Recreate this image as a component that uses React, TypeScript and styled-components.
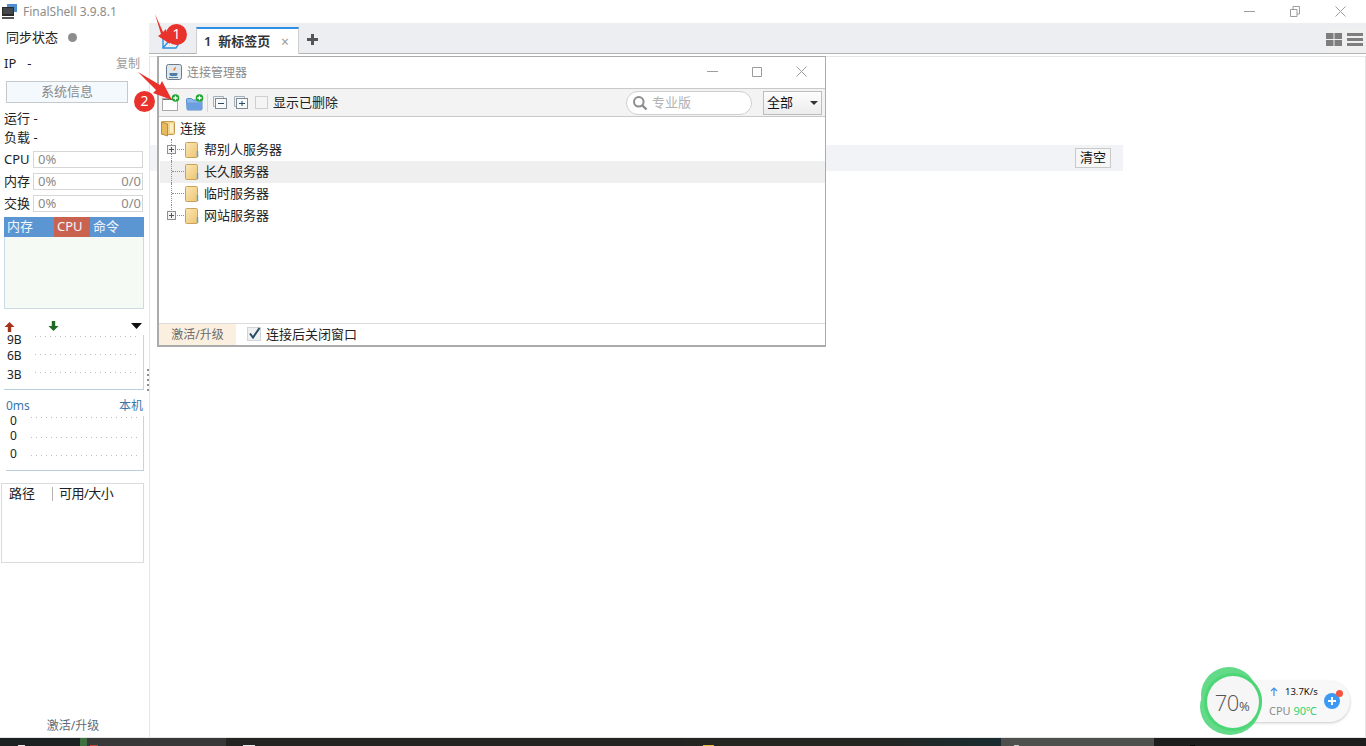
import React from "react";
import styled, { createGlobalStyle } from "styled-components";

const GlobalStyle = createGlobalStyle`
  html, body {
    margin: 0;
    padding: 0;
    background: #fff;
    overflow: hidden;
  }
  * {
    box-sizing: border-box;
  }
  body {
    font-family: "Noto Sans", "Noto Sans CJK SC", sans-serif;
    font-size: 13px;
    color: #222;
  }
`;

const Page = styled.div`
  width: 1366px;
  height: 746px;
  display: flex;
  flex-direction: column;
  overflow: hidden;
`;

/* ---- title bar ---- */

const TitleBar = styled.div`
  height: 23px;
  flex: none;
  display: flex;
  align-items: center;
  padding-left: 2px;
`;

const TitleText = styled.span`
  margin-left: 6px;
  color: #8c8c8c;
  font-size: 12px;
  line-height: 23px;
`;

const WindowButtons = styled.div`
  margin-left: auto;
  display: flex;
  align-items: center;
  padding-right: 20px;
  gap: 35px;
  svg {
    display: block;
  }
`;

/* ---- left panel ---- */

const Workspace = styled.div`
  flex: 1;
  display: flex;
  min-height: 0;
  border-bottom: 1px solid #e6e6e6;
`;

const Sidebar = styled.aside`
  width: 149px;
  flex: none;
  display: flex;
  flex-direction: column;
  position: relative;
`;

const SyncRow = styled.div`
  height: 28px;
  display: flex;
  align-items: center;
  padding: 0 0 2px 6px;
  gap: 10px;
`;

const SyncDot = styled.span`
  width: 9px;
  height: 9px;
  border-radius: 50%;
  background: #8d8d8d;
  margin-top: 2px;
`;

const IpRow = styled.div`
  height: 22px;
  margin-top: 1px;
  display: flex;
  align-items: center;
  padding: 0 9px 0 4px;
`;

const IpDash = styled.span`
  margin-left: 11px;
`;

const CopyLink = styled.span`
  margin-left: auto;
  color: #9a9a9a;
  font-size: 12px;
`;

const SysButton = styled.div`
  width: 122px;
  height: 22px;
  margin: 7px 0 0 6px;
  border: 1px solid #c5c9cb;
  background: #f3f9fd;
  color: #8a8a8a;
  text-align: center;
  line-height: 18px;
`;

const Stats = styled.div`
  margin-top: 6px;
`;

const StatRow = styled.div`
  height: 19px;
  line-height: 19px;
  padding-left: 4px;
`;

const Meters = styled.div`
  margin-top: 4px;
  display: flex;
  flex-direction: column;
  gap: 5px;
`;

const MeterRow = styled.div`
  height: 17px;
  display: flex;
  align-items: center;
  padding-left: 4px;
`;

const MeterLabel = styled.span`
  width: 29px;
  flex: none;
  padding-bottom: 2px;
`;

const MeterBar = styled.div`
  width: 110px;
  height: 17px;
  border: 1px solid #d6d6d6;
  display: flex;
  justify-content: space-between;
  padding: 0 1px 0 4px;
  color: #8a8a8a;
  font-size: 13px;
  line-height: 14px;
`;

const MonitorTabs = styled.div`
  width: 140px;
  height: 20px;
  margin: 5px 0 0 4px;
  display: flex;
  background: #5b96d3;
  color: #f2f6fb;
  line-height: 18px;
`;

const MonitorTab = styled.div<{ $w: number; $active?: boolean }>`
  width: ${(p) => p.$w}px;
  padding-left: 3px;
  background: ${(p) => (p.$active ? "#c9634f" : "transparent")};
`;

const MonitorPlot = styled.div`
  width: 140px;
  height: 72px;
  margin-left: 4px;
  background: #f5faf4;
  border: 1px solid #c8dbe7;
  border-top: 0;
`;

const TrafficHead = styled.div`
  height: 12px;
  width: 140px;
  margin: 11px 0 0 4px;
  display: flex;
  align-items: center;
  justify-content: space-between;
  padding-right: 2px;
  svg {
    display: block;
  }
`;

const TrafficArrows = styled.div`
  display: flex;
  gap: 33px;
`;

const Chart = styled.div<{ $left: number; $h: number; $mt?: number }>`
  width: ${(p) => 144 - p.$left}px;
  height: ${(p) => p.$h}px;
  margin: ${(p) => p.$mt ?? 0}px 0 0 ${(p) => p.$left}px;
  border-right: 1px solid #c5d5dd;
  border-bottom: 1px solid #b8d0da;
  display: flex;
`;

const ChartAxis = styled.div<{ $w: number; $pad: number }>`
  width: ${(p) => p.$w}px;
  flex: none;
  padding-left: ${(p) => p.$pad}px;
  font-size: 12px;
  line-height: 14px;
`;

const AxisTick = styled.div<{ $top: number }>`
  margin-top: ${(p) => p.$top}px;
`;

const ChartLines = styled.div`
  flex: 1;
  padding-right: 3px;
`;

const GridLine = styled.div<{ $top: number }>`
  margin-top: ${(p) => p.$top}px;
  height: 1px;
  background: repeating-linear-gradient(to right, #bcbcbc 0 1px, transparent 1px 5px);
`;

const PingHead = styled.div`
  height: 16px;
  margin: 7px 6px 3px 6px;
  display: flex;
  justify-content: space-between;
  color: #3d76ab;
  font-size: 12px;
  line-height: 18px;
`;

const DiskTable = styled.div`
  width: 143px;
  height: 80px;
  margin: 12px 0 0 1px;
  border: 1px solid #d9dcdc;
  display: flex;
  align-items: flex-start;
  padding-top: 3px;
`;

const DiskColumn = styled.div<{ $w?: number; $divider?: boolean }>`
  width: ${(p) => (p.$w ? `${p.$w}px` : "auto")};
  height: 14px;
  padding-left: ${(p) => (p.$divider ? 6 : 7)}px;
  border-left: ${(p) => (p.$divider ? "1px solid #b4b4b4" : "0")};
  line-height: 12px;
  font-size: 13px;
  letter-spacing: ${(p) => (p.$divider ? "-0.5px" : "0")};
`;

const SidebarUpgrade = styled.div`
  margin-top: auto;
  height: 24px;
  text-align: center;
  color: #5e6b78;
  font-size: 12px;
  line-height: 26px;
  padding-right: 3px;
`;

const ResizeGrip = styled.div`
  position: absolute;
  right: 0;
  top: 346px;
  width: 2px;
  height: 22px;
  background: repeating-linear-gradient(to bottom, #8e8e8e 0 2px, transparent 2px 5px);
`;

/* ---- main area ---- */

const Main = styled.main`
  flex: 1;
  min-width: 0;
  position: relative;
  display: flex;
  flex-direction: column;
`;

const TabBar = styled.div`
  height: 31px;
  flex: none;
  background: #edeef1;
  border-bottom: 1px solid #b4b4b4;
  display: flex;
  align-items: flex-end;
  padding-left: 11px;
`;

const TabBarIcon = styled.div`
  width: 36px;
  height: 30px;
  display: flex;
  align-items: center;
  padding: 6px 0 0 2px;
  svg {
    display: block;
  }
`;

const Tab = styled.div`
  width: 103px;
  height: 27px;
  margin-bottom: -1px;
  background: #fff;
  border-top: 2px solid #2b8fe3;
  border-left: 1px solid #cfcfcf;
  border-right: 1px solid #cfcfcf;
  display: flex;
  align-items: center;
  padding: 0 9px 3px 7px;
  font-weight: 600;
  color: #333;
`;

const TabClose = styled.span`
  margin-left: auto;
  margin-top: 3px;
  color: #9b9b9b;
  font-weight: 400;
  font-size: 14px;
  line-height: 1;
`;

const TabAdd = styled.div`
  height: 30px;
  margin-left: 8px;
  padding-top: 3px;
  display: flex;
  align-items: center;
  svg {
    display: block;
  }
`;

const LayoutToggle = styled.div`
  margin-left: auto;
  width: 40px;
  height: 26px;
  background: #efefef;
  display: flex;
  align-items: center;
  gap: 5px;
  padding-bottom: 1px;
  svg {
    display: block;
  }
`;

const Content = styled.div`
  flex: 1;
  margin-top: 2px;
  border: 1px solid #e6e6e6;
  border-bottom: 0;
  padding-top: 88px;
`;

const LogBar = styled.div`
  width: 973px;
  height: 26px;
  background: #f2f3f7;
  display: flex;
  align-items: center;
  justify-content: flex-end;
  padding-right: 12px;
`;

const ClearButton = styled.div`
  width: 36px;
  height: 20px;
  border: 1px solid #c9c9c9;
  background: #f6f6f6;
  color: #111;
  text-align: center;
  line-height: 17px;
`;

/* ---- connection manager window ---- */

const ManagerWindow = styled.section`
  position: absolute;
  left: 8px;
  top: 33px;
  width: 669px;
  height: 291px;
  background: #fff;
  border: 2px solid #ababab;
  border-top-width: 1px;
  border-right-width: 1px;
  display: flex;
  flex-direction: column;
`;

const ManagerTitle = styled.div`
  height: 31px;
  flex: none;
  display: flex;
  align-items: center;
  padding: 0 0 2px 7px;
  color: #8a8a8a;
  font-size: 12px;
  svg {
    display: block;
  }
`;

const ManagerTitleText = styled.span`
  margin-left: 5px;
`;

const ManagerButtons = styled.div`
  margin-left: auto;
  display: flex;
  align-items: center;
  gap: 34px;
  padding-right: 18px;
`;

const ManagerToolbar = styled.div`
  height: 29px;
  flex: none;
  background: #f3f3f3;
  border-top: 1px solid #c9c9c9;
  border-bottom: 1px solid #c9c9c9;
  display: flex;
  align-items: center;
  padding: 0 3px 0 3px;
  svg {
    display: block;
  }
`;

const ToolSeparator = styled.span`
  width: 1px;
  height: 18px;
  background: #d6d6d6;
  margin: 0 5px 0 3px;
`;

const ToolGroup = styled.div<{ $gap: number }>`
  display: flex;
  align-items: center;
  gap: ${(p) => p.$gap}px;
`;

const EmptyCheck = styled.span`
  width: 13px;
  height: 13px;
  margin-left: 7px;
  border: 1px solid #cfcfcf;
  background: #f4f4f4;
`;

const ShowDeleted = styled.span`
  margin-left: 5px;
  padding-bottom: 2px;
  color: #222;
`;

const SearchBox = styled.div`
  margin-left: auto;
  width: 126px;
  height: 24px;
  background: #fff;
  border: 1px solid #cfcfcf;
  border-radius: 12px;
  display: flex;
  align-items: center;
  padding-left: 5px;
  gap: 4px;
  color: #b2b2b2;
`;

const SearchHint = styled.span`
  padding-bottom: 2px;
`;

const FilterSelect = styled.div`
  width: 59px;
  height: 24px;
  margin-left: 11px;
  border: 1px solid #bdbdbd;
  background: linear-gradient(#fdfdfd, #ececec);
  color: #111;
  display: flex;
  align-items: center;
  justify-content: space-between;
  padding: 0 3px 2px 3px;
`;

const SelectCaret = styled.span`
  width: 0;
  height: 0;
  margin-top: 2px;
  border-left: 4px solid transparent;
  border-right: 4px solid transparent;
  border-top: 4px solid #333;
`;

const Tree = styled.div`
  flex: 1;
  min-height: 0;
  padding-top: 1px;
`;

const RootRow = styled.div`
  height: 21px;
  display: flex;
  align-items: center;
  padding-left: 2px;
  gap: 5px;
  svg {
    display: block;
  }
`;

const RootLabel = styled.span`
  padding-bottom: 2px;
`;

const TreeRow = styled.div<{ $selected?: boolean }>`
  height: 22px;
  margin-left: 1px;
  display: flex;
  align-items: center;
  background: ${(p) => (p.$selected ? "#efefef" : "transparent")};
  svg {
    display: block;
  }
`;

const TreeGutter = styled.div<{ $last?: boolean }>`
  width: 25px;
  height: 100%;
  flex: none;
  position: relative;
  &::before {
    content: "";
    position: absolute;
    left: 11px;
    top: 0;
    height: ${(p) => (p.$last ? "11px" : "100%")};
    border-left: 1px dotted #8e8e8e;
  }
  &::after {
    content: "";
    position: absolute;
    left: 12px;
    right: 1px;
    top: 10px;
    border-top: 1px dotted #8e8e8e;
  }
`;

const Expander = styled.span`
  position: absolute;
  z-index: 1;
  left: 7px;
  top: 6px;
  width: 9px;
  height: 9px;
  background: #f3f3f3;
  border: 1px solid #8f8f8f;
  &::before,
  &::after {
    content: "";
    position: absolute;
    background: #555;
  }
  &::before {
    left: 1px;
    right: 1px;
    top: 3px;
    height: 1px;
  }
  &::after {
    top: 1px;
    bottom: 1px;
    left: 3px;
    width: 1px;
  }
`;

const TreeLabel = styled.span`
  margin-left: 5px;
  padding-bottom: 3px;
  color: #222;
`;

const ManagerFooter = styled.div`
  height: 22px;
  flex: none;
  border-top: 1px solid #dcdcdc;
  display: flex;
  align-items: stretch;
`;

const FooterUpgrade = styled.div`
  width: 77px;
  background: #fbf0e0;
  color: #6b6b6b;
  font-size: 12px;
  text-align: center;
  line-height: 21px;
`;

const CloseAfterConnect = styled.label`
  display: flex;
  align-items: center;
  margin-left: 11px;
  gap: 5px;
  color: #222;
  padding-bottom: 2px;
  svg {
    display: block;
  }
`;

/* ---- annotations ---- */

const Annotation = styled.svg`
  position: absolute;
  left: 0;
  top: 0;
  pointer-events: none;
  overflow: visible;
`;

const StepBadge = styled.span<{ $x: number; $y: number }>`
  position: absolute;
  left: ${(p) => p.$x}px;
  top: ${(p) => p.$y}px;
  width: 21px;
  height: 21px;
  border-radius: 50%;
  background: #e9322b;
  color: #fff;
  text-align: center;
  font-size: 14px;
  line-height: 20px;
`;

const AnnotationLayer = styled.div`
  position: absolute;
  left: 0;
  top: 0;
  width: 0;
  height: 0;
  z-index: 5;
`;

/* ---- floating speed widget ---- */

const SpeedWidget = styled.div`
  position: absolute;
  left: 1051px;
  top: 644px;
  width: 150px;
  height: 68px;
  display: flex;
  align-items: center;
  z-index: 6;
`;

const RingWrap = styled.div`
  position: relative;
  z-index: 1;
  width: 62px;
  height: 68px;
  flex: none;
  svg {
    display: block;
  }
`;

const RingValue = styled.div`
  position: absolute;
  left: 2px;
  right: 0;
  top: 21px;
  text-align: center;
  font-family: "Open Sans", "Noto Sans", sans-serif;
  font-weight: 300;
  font-size: 22px;
  line-height: 28px;
  color: #555;
  letter-spacing: -0.5px;
  small {
    font-size: 13px;
    font-weight: 400;
  }
`;

const SpeedPill = styled.div`
  margin-left: -14px;
  width: 102px;
  height: 41px;
  background: #f8f8f8;
  border-radius: 0 21px 21px 0;
  box-shadow: 0 1px 3px rgba(0, 0, 0, 0.22);
  display: flex;
  align-items: center;
  padding-left: 21px;
`;

const PillStats = styled.div`
  display: flex;
  flex-direction: column;
  gap: 4px;
  line-height: 15px;
`;

const PillSpeed = styled.div`
  display: flex;
  align-items: center;
  gap: 7px;
  padding-left: 1px;
  font-size: 9.5px;
  color: #111;
  svg {
    display: block;
  }
`;

const PillCpu = styled.div`
  font-size: 11px;
  color: #8b8b8b;
  span {
    color: #2ed573;
  }
`;

const PillAction = styled.div`
  margin-left: auto;
  margin-right: 10px;
  position: relative;
  width: 16px;
  height: 16px;
  border-radius: 50%;
  background: #3b9af3;
  color: #fff;
  display: flex;
  align-items: center;
  justify-content: center;
  &::after {
    content: "";
    position: absolute;
    right: -3px;
    top: -3px;
    width: 7px;
    height: 7px;
    border-radius: 50%;
    background: #f3543c;
  }
  svg {
    display: block;
  }
`;

/* ---- task bar ---- */

const TaskBar = styled.footer`
  height: 8px;
  flex: none;
  display: flex;
`;

const TaskSegment = styled.div<{ $w: number; $bg: string; $pad?: number }>`
  width: ${(p) => p.$w}px;
  background: ${(p) => p.$bg};
  padding-left: ${(p) => p.$pad ?? 0}px;
  display: flex;
  align-items: flex-end;
  gap: 0;
`;

const TaskIconTop = styled.span<{ $w: number; $color: string }>`
  width: ${(p) => p.$w}px;
  height: 1px;
  background: ${(p) => p.$color};
`;

/* ---- icons ---- */

const AppLogo = () => (
  <svg width="15" height="15" viewBox="0 0 15 15">
    <rect x="5" y="0" width="10" height="8" fill="#4f8fd0" />
    <rect x="0" y="3" width="12" height="9" fill="#2a2a2a" />
    <rect x="1" y="4" width="10" height="6" fill="#44484c" />
    <rect x="0" y="13" width="12" height="2" fill="#555" />
  </svg>
);

const MinIcon = ({ w = 11, color = "#9d9d9d" }: { w?: number; color?: string }) => (
  <svg width={w} height="11" viewBox={`0 0 ${w} 11`}>
    <path d={`M0 5.5H${w}`} stroke={color} strokeWidth="1" fill="none" />
  </svg>
);

const RestoreIcon = () => (
  <svg width="10" height="11" viewBox="0 0 10 11" fill="none" stroke="#9d9d9d">
    <path d="M.5 3.5h6.5v7H.5z" />
    <path d="M3 3.5V.5h6.5v7.5H7" />
  </svg>
);

const MaxIcon = () => (
  <svg width="10" height="10" viewBox="0 0 10 10" fill="none" stroke="#9d9d9d">
    <path d="M.5.5h9v9h-9z" />
  </svg>
);

const CloseIcon = () => (
  <svg width="11" height="11" viewBox="0 0 11 11" fill="none" stroke="#9d9d9d">
    <path d="M.5.5l10 10M10.5.5l-10 10" />
  </svg>
);

const UpArrow = () => (
  <svg width="11" height="11" viewBox="0 0 11 11">
    <path d="M5.5 1L10.5 6H7.2V11H3.8V6H.5z" fill="#a5321a" />
  </svg>
);

const DownArrow = () => (
  <svg width="11" height="11" viewBox="0 0 11 11">
    <path d="M5.5 10L10.5 5H7.2V0H3.8V5H.5z" fill="#1f6a22" />
  </svg>
);

const DropCaret = () => (
  <svg width="11" height="6" viewBox="0 0 11 6">
    <path d="M0 0H11L5.5 6z" fill="#111" />
  </svg>
);

const OpenTabIcon = () => (
  <svg width="20" height="16" viewBox="0 0 20 16" fill="none" stroke="#2d8fe0" strokeWidth="1.4">
    <path d="M1 3v12h13l5-8H11" />
    <path d="M1 15l5-6h8" />
  </svg>
);

const PlusIcon = () => (
  <svg width="11" height="11" viewBox="0 0 11 11">
    <path d="M4 0h3v4h4v3H7v4H4V7H0V4h4z" fill="#555" />
  </svg>
);

const GridIcon = () => (
  <svg width="16" height="13" viewBox="0 0 16 13">
    <path d="M0 0h7.5v6H0zM8.5 0H16v6H8.5zM0 7h7.5v6H0zM8.5 7H16v6H8.5z" fill="#7e7e7e" />
  </svg>
);

const ListIcon = () => (
  <svg width="16" height="13" viewBox="0 0 16 13">
    <path d="M0 0h16v3H0zM0 5h16v3H0zM0 10h16v3H0z" fill="#7e7e7e" />
  </svg>
);

const JavaIcon = () => (
  <svg width="16" height="16" viewBox="0 0 16 16">
    <rect x=".5" y=".5" width="15" height="15" rx="2" fill="#dfe6ec" stroke="#6d7a86" />
    <path d="M9 2c1 2-3 3-1 5 .6-1 3-2 1-5z" fill="#e3741e" />
    <path d="M3.5 9h8v1c0 1.500-1 2-2 2h-4c-1 0-2-.5-2-2z" fill="#4e7ea6" />
    <path d="M3 13.500h9" stroke="#4e7ea6" />
  </svg>
);

const GreenBadge = ({ cx, cy }: { cx: number; cy: number }) => (
  <>
    <circle cx={cx} cy={cy} r="3.800" fill="#1fa52d" />
    <path d={`M${cx - 2.2} ${cy}h4.400M${cx} ${cy - 2.2}v4.400`} stroke="#fff" strokeWidth="1.300" />
  </>
);

const NewConnectionIcon = () => (
  <svg width="18" height="18" viewBox="0 0 18 18">
    <rect x=".5" y="4.500" width="15" height="12" fill="#fff" stroke="#a8a8a8" />
    <path d="M1 5.500h14" stroke="#6e6e6e" />
    <GreenBadge cx={13.5} cy={4} />
  </svg>
);

const NewFolderIcon = () => (
  <svg width="18" height="18" viewBox="0 0 18 18">
    <path d="M.5 5.500a1 1 0 0 1 1-1h4l1.500 1.500h8a1 1 0 0 1 1 1V15a1 1 0 0 1-1 1h-13a1 1 0 0 1-1-1z" fill="#8db8ea" stroke="#5a8cc8" />
    <path d="M1 8.500h15V15.500H1z" fill="#6c9fe0" />
    <GreenBadge cx={13.5} cy={4} />
  </svg>
);

const TreeBoxIcon = ({ plus }: { plus?: boolean }) => (
  <svg width="14" height="13" viewBox="0 0 14 13" fill="none">
    <path d="M.5.5h10v2" stroke="#a6b0b8" />
    <path d="M.5.5v10h2" stroke="#a6b0b8" />
    <rect x="2.500" y="2.500" width="11" height="10" fill="#f7f9fa" stroke="#7d8b96" />
    <path d="M5 7.500h6" stroke="#2b4a63" />
    {plus && <path d="M8 5v5" stroke="#2b4a63" />}
  </svg>
);

const SearchIcon = () => (
  <svg width="16" height="16" viewBox="0 0 16 16" fill="none">
    <circle cx="6.800" cy="6.800" r="4.800" stroke="#8d8d8d" strokeWidth="2" />
    <path d="M10.500 10.500L14.500 14.500" stroke="#8d8d8d" strokeWidth="2.400" />
  </svg>
);

const FolderIcon = () => (
  <svg width="14" height="16" viewBox="0 0 14 16">
    <defs>
      <linearGradient id="folderFill" x1="0" y1="0" x2="1" y2="1">
        <stop offset="0" stopColor="#fbe7b4" />
        <stop offset="1" stopColor="#eec471" />
      </linearGradient>
    </defs>
    <rect x=".5" y=".5" width="12" height="15" rx="1" fill="url(#folderFill)" stroke="#c9a35c" />
    <path d="M12.500 9v6" stroke="#5aa4d0" strokeWidth="1.500" />
  </svg>
);

const OpenFolderIcon = () => (
  <svg width="14" height="17" viewBox="0 0 14 17">
    <rect x=".5" y="1.500" width="13" height="13" rx="1" fill="#f3d58c" stroke="#c59c4e" />
    <path d="M.5 2l6 2v12l-6-2z" fill="#e8b95d" stroke="#b98d3f" />
    <path d="M9 3.500h3v9H9z" fill="#fbeec8" />
  </svg>
);

const CheckedBox = () => (
  <svg width="14" height="14" viewBox="0 0 14 14" fill="none">
    <rect x=".5" y=".5" width="13" height="13" fill="#eef0f2" stroke="#d0d4d8" />
    <path d="M3 6.500l3 4L12.500 1" stroke="#2d4a63" strokeWidth="2" />
  </svg>
);

const SpeedRing = () => (
  <svg width="62" height="68" viewBox="0 0 62 68">
    <circle cx="29" cy="28" r="28" fill="#62da88" />
    <ellipse cx="30" cy="40" rx="30" ry="28" fill="#62da88" />
    <circle cx="36" cy="34" r="26" fill="#5ad882" />
    <circle cx="33" cy="35" r="29" fill="#45d46f" fillOpacity=".7" />
    <circle cx="33" cy="35" r="26" fill="#f6f6f6" />
  </svg>
);

const BlueUp = () => (
  <svg width="8" height="9" viewBox="0 0 8 9" fill="none" stroke="#3b93ea" strokeWidth="1.200">
    <path d="M4 9V1M1 4l3-3 3 3" />
  </svg>
);

const WhitePlus = () => (
  <svg width="8" height="8" viewBox="0 0 8 8">
    <path d="M3 0h2v3h3v2H5v3H3V5H0V3h3z" fill="#fff" />
  </svg>
);

const folders = [
  { name: "帮别人服务器", expandable: true },
  { name: "长久服务器", selected: true },
  { name: "临时服务器" },
  { name: "网站服务器", expandable: true, last: true },
];

const taskSegments = [
  { w: 80, bg: "#1c2121", pad: 18, top: 7, color: "#e8e8e8" },
  { w: 7, bg: "#3e6f3e" },
  { w: 139, bg: "#383838", pad: 3, top: 8, color: "#c9483a" },
  { w: 457, bg: "#242523", pad: 17, top: 12, color: "#e6e6e6" },
  { w: 187, bg: "#252622", pad: 20, top: 11, color: "#e8b83f" },
  { w: 131, bg: "linear-gradient(to right, #252622, #1a2c30)" },
  { w: 153, bg: "#4e504e", pad: 13, top: 5, color: "#cfcfcf" },
  { w: 212, bg: "#1d1d1d", pad: 36, top: 5, color: "#050505" },
];

export default function App() {
  return (
    <Page>
      <GlobalStyle />
      <TitleBar>
        <AppLogo />
        <TitleText>FinalShell 3.9.8.1</TitleText>
        <WindowButtons>
          <MinIcon />
          <RestoreIcon />
          <CloseIcon />
        </WindowButtons>
      </TitleBar>

      <Workspace>
        <Sidebar>
          <SyncRow>
            同步状态
            <SyncDot />
          </SyncRow>
          <IpRow>
            IP
            <IpDash>-</IpDash>
            <CopyLink>复制</CopyLink>
          </IpRow>
          <SysButton>系统信息</SysButton>
          <Stats>
            <StatRow>运行 -</StatRow>
            <StatRow>负载 -</StatRow>
          </Stats>
          <Meters>
            <MeterRow>
              <MeterLabel>CPU</MeterLabel>
              <MeterBar>
                <span>0%</span>
              </MeterBar>
            </MeterRow>
            <MeterRow>
              <MeterLabel>内存</MeterLabel>
              <MeterBar>
                <span>0%</span>
                <span>0/0</span>
              </MeterBar>
            </MeterRow>
            <MeterRow>
              <MeterLabel>交换</MeterLabel>
              <MeterBar>
                <span>0%</span>
                <span>0/0</span>
              </MeterBar>
            </MeterRow>
          </Meters>
          <MonitorTabs>
            <MonitorTab $w={50}>内存</MonitorTab>
            <MonitorTab $w={36} $active>
              CPU
            </MonitorTab>
            <MonitorTab $w={54}>命令</MonitorTab>
          </MonitorTabs>
          <MonitorPlot />
          <TrafficHead>
            <TrafficArrows>
              <UpArrow />
              <DownArrow />
            </TrafficArrows>
            <DropCaret />
          </TrafficHead>
          <Chart $left={4} $h={55} $mt={3}>
            <ChartAxis $w={31} $pad={3}>
              <AxisTick $top={-2}>9B</AxisTick>
              <AxisTick $top={2}>6B</AxisTick>
              <AxisTick $top={5}>3B</AxisTick>
            </ChartAxis>
            <ChartLines>
              <GridLine $top={1} />
              <GridLine $top={17} />
              <GridLine $top={17} />
            </ChartLines>
          </Chart>
          <PingHead>
            <span>0ms</span>
            <span>本机</span>
          </PingHead>
          <Chart $left={6} $h={55}>
            <ChartAxis $w={25} $pad={4}>
              <AxisTick $top={-2}>0</AxisTick>
              <AxisTick $top={1}>0</AxisTick>
              <AxisTick $top={4}>0</AxisTick>
            </ChartAxis>
            <ChartLines>
              <GridLine $top={1} />
              <GridLine $top={19} />
              <GridLine $top={17} />
            </ChartLines>
          </Chart>
          <DiskTable>
            <DiskColumn $w={50}>路径</DiskColumn>
            <DiskColumn $divider>可用/大小</DiskColumn>
          </DiskTable>
          <SidebarUpgrade>激活/升级</SidebarUpgrade>
          <ResizeGrip />
        </Sidebar>

        <Main>
          <TabBar>
            <TabBarIcon>
              <OpenTabIcon />
            </TabBarIcon>
            <Tab>
              1&nbsp;&nbsp;新标签页
              <TabClose>×</TabClose>
            </Tab>
            <TabAdd>
              <PlusIcon />
            </TabAdd>
            <LayoutToggle>
              <GridIcon />
              <ListIcon />
            </LayoutToggle>
          </TabBar>
          <Content>
            <LogBar>
              <ClearButton>清空</ClearButton>
            </LogBar>
          </Content>

          <ManagerWindow>
            <ManagerTitle>
              <JavaIcon />
              <ManagerTitleText>连接管理器</ManagerTitleText>
              <ManagerButtons>
                <MinIcon />
                <MaxIcon />
                <CloseIcon />
              </ManagerButtons>
            </ManagerTitle>
            <ManagerToolbar>
              <ToolGroup $gap={6}>
                <NewConnectionIcon />
                <NewFolderIcon />
              </ToolGroup>
              <ToolSeparator />
              <ToolGroup $gap={7}>
                <TreeBoxIcon />
                <TreeBoxIcon plus />
              </ToolGroup>
              <EmptyCheck />
              <ShowDeleted>显示已删除</ShowDeleted>
              <SearchBox>
                <SearchIcon />
                <SearchHint>专业版</SearchHint>
              </SearchBox>
              <FilterSelect>
                全部
                <SelectCaret />
              </FilterSelect>
            </ManagerToolbar>
            <Tree>
              <RootRow>
                <OpenFolderIcon />
                <RootLabel>连接</RootLabel>
              </RootRow>
              {folders.map((f) => (
                <TreeRow key={f.name} $selected={f.selected}>
                  <TreeGutter $last={f.last}>{f.expandable && <Expander />}</TreeGutter>
                  <FolderIcon />
                  <TreeLabel>{f.name}</TreeLabel>
                </TreeRow>
              ))}
            </Tree>
            <ManagerFooter>
              <FooterUpgrade>激活/升级</FooterUpgrade>
              <CloseAfterConnect>
                <CheckedBox />
                连接后关闭窗口
              </CloseAfterConnect>
            </ManagerFooter>
          </ManagerWindow>

          <AnnotationLayer>
            <Annotation width="60" height="100">
              <path d="M6 -9 L14 9 L17 6 L21 21 L9 13 L12 11 Z" fill="#e9322b" />
              <path d="M-11 49 L11 62 L13 58 L23 77 L4 70 L7 67 Z" fill="#e9322b" />
            </Annotation>
            <StepBadge $x={17} $y={1}>
              1
            </StepBadge>
            <StepBadge $x={-15} $y={68}>
              2
            </StepBadge>
          </AnnotationLayer>

          <SpeedWidget>
            <RingWrap>
              <SpeedRing />
              <RingValue>
                70<small>%</small>
              </RingValue>
            </RingWrap>
            <SpeedPill>
              <PillStats>
                <PillSpeed>
                  <BlueUp />
                  13.7K/s
                </PillSpeed>
                <PillCpu>
                  CPU <span>90℃</span>
                </PillCpu>
              </PillStats>
              <PillAction>
                <WhitePlus />
              </PillAction>
            </SpeedPill>
          </SpeedWidget>
        </Main>
      </Workspace>

      <TaskBar>
        {taskSegments.map((s, i) => (
          <TaskSegment key={i} $w={s.w} $bg={s.bg} $pad={s.pad}>
            {s.top && s.color && <TaskIconTop $w={s.top} $color={s.color} />}
          </TaskSegment>
        ))}
      </TaskBar>
    </Page>
  );
}
